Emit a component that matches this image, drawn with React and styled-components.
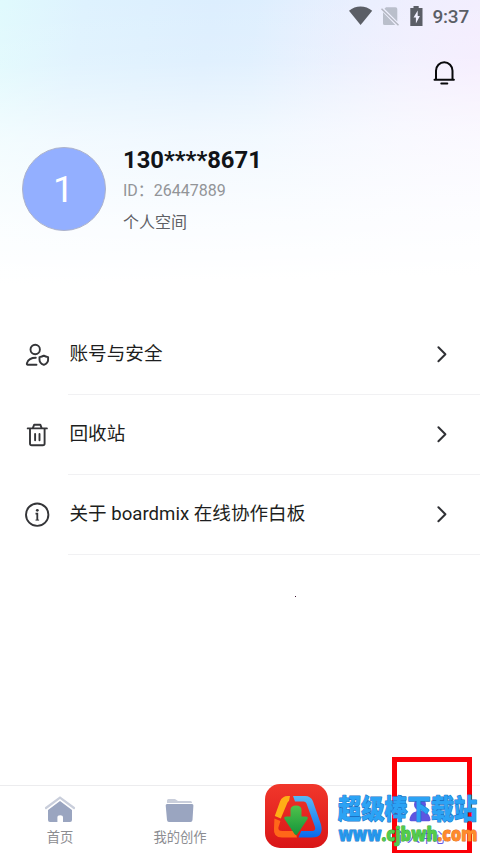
import styled, { createGlobalStyle, css } from 'styled-components'

const GlobalStyle = createGlobalStyle`
    * {
        box-sizing:border-box;
    }
    body {
        margin:0;
        background:#fff;
        font-family:Roboto, "Noto Sans CJK SC", sans-serif;
    }
`;

const Screen = styled.div`
    position:relative;
    display:flex;
    flex-direction:column;
    width:480px;
    height:853px;
    overflow:hidden;
    background:#fff;
`;

const Header = styled.header`
    height:315px;
    background:
        linear-gradient(179deg, rgba(255,255,255,0) 0%, rgba(255,255,255,0.12) 20%, rgba(255,255,255,0.6) 43%, rgba(255,255,255,0.85) 68%, #fff 88%),
        radial-gradient(circle at 500px 70px, #f5ebfe 0%, rgba(243,238,254,0.8) 90px, rgba(240,242,254,0) 250px),
        linear-gradient(100deg, #e0fafd 0%, #def2fe 16%, #dceefe 40%, #e2f0fe 70%, #eff3fe 100%);
`;

const StatusBar = styled.div`
    display:flex;
    align-items:center;
    justify-content:flex-end;
    height:32px;
    padding:0 11px 0 0;
    color:#5b5e66;
`;

const Clock = styled.span`
    margin-left:9px;
    font-size:19px;
    font-weight:500;
    line-height:32px;
    letter-spacing:-0.2px;
    padding-top:1px;
`;

const Actions = styled.div`
    display:flex;
    justify-content:flex-end;
    height:82px;
    padding:26px 22px 0 0;
`;

const Profile = styled.div`
    display:flex;
    padding:33px 0 0 22px;
`;

const Avatar = styled.div`
    display:flex;
    align-items:center;
    justify-content:center;
    width:84px;
    height:84px;
    padding-right:1px;
    border:1px solid #adb3cb;
    border-radius:50%;
    background:#93afff;
    color:#fff;
    font-size:37px;
`;

const Details = styled.div`
    margin-left:17px;
`;

const Name = styled.h1`
    margin:0;
    color:#111317;
    font-size:23.8px;
    font-weight:700;
    line-height:26px;
`;

const Line = styled.p`
    margin:0;
    color:${props => props.$dark ? "#5e6065" : "#929498"};
    font-size:16px;
    line-height:${props => props.$dark ? "28px" : "36px"};
`;

const Menu = styled.main`
    flex:1;
`;

const MenuRow = styled.div`
    display:flex;
    height:80px;
    padding-left:24px;
`;

const MenuIcon = styled.div`
    display:flex;
    align-items:center;
    width:44px;
`;

const MenuBody = styled.div`
    flex:1;
    display:flex;
    align-items:center;
    justify-content:space-between;
    padding-right:30px;
    border-bottom:1px solid #f1f1f3;
    color:#1d1e20;
`;

const MenuLabel = styled.span`
    padding:0 0 1px 1.5px;
    font-size:18.6px;
    line-height:28px;
    white-space:nowrap;
`;

const Speck = styled.i`
    display:block;
    width:1px;
    height:1px;
    margin:41px 0 0 295px;
    background:#3c1030;
`;

const TabBar = styled.nav`
    display:grid;
    grid-template-columns:repeat(4, 1fr);
    height:68px;
    border-top:1px solid #ececee;
`;

const Tab = styled.div`
    display:flex;
    flex-direction:column;
    align-items:center;
    padding-top:9px;
    color:#8c8d91;
    font-size:13.3px;
    line-height:20px;
    ${props => props.$active && css`
        color:#6457e8;
    `}

    svg {
        margin-bottom:3px;
    }
`;

const Highlight = styled.div`
    position:absolute;
    left:392px;
    top:757px;
    width:80px;
    height:98px;
    border:5px solid #fb0007;
`;

const Watermark = styled.svg`
    position:absolute;
    left:260px;
    top:780px;
`;

const UserShield = () => (
    <svg width="26" height="26" viewBox="0 0 26 26" fill="none" stroke="#343538" strokeWidth="1.9" strokeLinecap="round" strokeLinejoin="round">
        <circle cx="11.2" cy="7.5" r="4.7" />
        <path d="M12.5 22.8H3.5Q2.5 22.8 3 21C4.2 17.5 7.5 15.8 11.8 15.8" />
        <path d="M19.8 13.6c1.6 1.1 2.8 1.3 4.3 1.5v2.6c0 2.6-1.7 4.2-4.3 5.2-2.6-1-4.3-2.6-4.3-5.2v-2.6c1.5-.2 2.7-.4 4.3-1.5z" />
    </svg>
)

const Trash = () => (
    <svg width="26" height="26" viewBox="0 0 26 26" fill="none" stroke="#343538" strokeWidth="1.9" strokeLinecap="round" strokeLinejoin="round">
        <path d="M3.7 6.4h19.2M8.8 6.2l1.4-3.5h6.1l1.4 3.5M6 6.8v14.6q0 1.8 1.8 1.8h11q1.8 0 1.8-1.8V6.8" />
        <path d="M11.1 12v6.2M15.5 12v6.2" />
    </svg>
)

const Info = () => (
    <svg width="26" height="26" viewBox="0 0 26 26" fill="none" stroke="#343538" strokeWidth="1.9">
        <circle cx="13.2" cy="12.7" r="11.2" />
        <circle cx="13.3" cy="8.3" r="1.4" fill="#343538" stroke="none" />
        <path d="M11.5 11.6h1.8v6.4" strokeWidth="1.8" />
        <path d="M11.5 18.1h3.6" strokeWidth="1" />
    </svg>
)

const Chevron = () => (
    <svg width="18" height="20" viewBox="0 0 18 20" fill="none" stroke="#303135" strokeWidth="2" strokeLinecap="round" strokeLinejoin="round">
        <path d="M6.4 2.2l7 7-7 7" />
    </svg>
)

const menu = [
    { label: "账号与安全", icon: <UserShield /> },
    { label: "回收站", icon: <Trash /> },
    { label: "关于 boardmix 在线协作白板", icon: <Info /> },
]

const App = () => {
    return (
        <Screen>
            <GlobalStyle />
            <Header>
                <StatusBar>
                    <svg width="76" height="24" viewBox="0 0 76 24">
                        <path d="M2 6.8C8.5 1 18.5 1 25.2 6.8L13.6 21z" fill="#5b5e66" />
                        <path d="M39 3.3h9.5q1.8 0 1.8 1.8V17.5L37.5 4.8zM36 8.3L48.3 21H37.5q-1.5 0-1.5-1.5z" fill="#babfcb" />
                        <path d="M34.5 4.7L51.5 21.3" stroke="#b3b6c0" strokeWidth="1.5" />
                        <path d="M66.5 2h5.2v1.9H75.5V22H63.3V3.9h3.2zM70.7 6.5l-4.2 7h2.4V19.5l4-7.5h-2.2z" fill="#5b5e66" fillRule="evenodd" />
                    </svg>
                    <Clock>9:37</Clock>
                </StatusBar>
                <Actions>
                    <svg width="28" height="30" viewBox="0 0 28 30" fill="none" stroke="#08090b" strokeWidth="2" strokeLinecap="round">
                        <path d="M4.5 21.7h19.4M6 21.5V12.8a8.25 8.5 0 0 1 16.5 0V21.5M11.3 25.4h6" />
                    </svg>
                </Actions>
                <Profile>
                    <Avatar>1</Avatar>
                    <Details>
                        <Name>130****8671</Name>
                        <Line>ID：26447889</Line>
                        <Line $dark>个人空间</Line>
                    </Details>
                </Profile>
            </Header>
            <Menu>
                {menu.map(item => (
                    <MenuRow key={item.label}>
                        <MenuIcon>{item.icon}</MenuIcon>
                        <MenuBody>
                            <MenuLabel>{item.label}</MenuLabel>
                            <Chevron />
                        </MenuBody>
                    </MenuRow>
                ))}
                <Speck />
            </Menu>
            <TabBar>
                <Tab>
                    <svg width="32" height="30" viewBox="0 0 32 30">
                        <path d="M2 13L16 2.5 30 13" fill="none" stroke="#c9cedb" strokeWidth="2.2" strokeLinecap="round" />
                        <path d="M16 6L28 15V25q0 2-2 2h-7v-4.5q0-2.3-2.8-2.3t-2.8 2.3V27H6q-2 0-2-2V15z" fill="#9aa5c0" />
                    </svg>
                    首页
                </Tab>
                <Tab>
                    <svg width="32" height="30" viewBox="0 0 32 30">
                        <path d="M3 7V5.5Q3 4 4.5 4H11l3 2h12.5Q28 6 28 7.5V8H3z" fill="#c9cedb" />
                        <path d="M3 9h25q1.5 0 1.4 1.5L28.5 25q-.2 2-2 2H5q-1.800 0-2-2L1.700 10.500Q1.600 9 3 9z" fill="#9aa5c0" />
                    </svg>
                    我的创作
                </Tab>
                <Tab />
                <Tab $active>
                    <svg width="32" height="30" viewBox="0 0 32 30" fill="#5f55e0">
                        <circle cx="16" cy="9.5" r="6" />
                        <path d="M5.5 24.5c1-6.500 5-8.500 10.500-8.500s9.500 2 10.500 8.500q.2 1.700-1.500 1.700H7q-1.700 0-1.500-1.700z" />
                    </svg>
                    个人中心
                </Tab>
            </TabBar>
            <Highlight />
            <Watermark width="220" height="73" viewBox="0 0 220 73">
                <defs>
                    <linearGradient id="tile" x1="0" y1="0" x2="0" y2="1">
                        <stop offset="0" stopColor="#f1372b" />
                        <stop offset="1" stopColor="#d91517" />
                    </linearGradient>
                    <linearGradient id="ribbon" x1="0" y1="0" x2="0" y2="1">
                        <stop offset="0" stopColor="#58b9f5" />
                        <stop offset="1" stopColor="#0869ee" />
                    </linearGradient>
                    <linearGradient id="arrow" x1="0" y1="0" x2="0" y2="1">
                        <stop offset="0" stopColor="#50c34b" />
                        <stop offset="1" stopColor="#14943b" />
                    </linearGradient>
                </defs>
                <rect x="5" y="4" width="63" height="64" rx="15" fill="url(#tile)" />
                <path d="M30 16h-2q-6 0-8 5.500L14.800 36l6 2.500L27.300 23q.6-1.500 1.700-2z" fill="#ffae16" />
                <path d="M14.400 38.500l6 2.500-2 6.500q-.5 3.500 4 3.500H35l2 6.500H22q-9 0-8-9z" fill="#ff6719" />
                <path d="M33 16h12q6 0 8 5.500l8 23Q64 57.500 52 57.500H38.500l2.700-6.500H52q4 0 3-4l-8.500-23.500q-.8-2-3-2H35z" fill="url(#ribbon)" />
                <path d="M30.500 30q0-4.500 5.500-4.500t5.500 4.500v6.500h4q3.500 0 1.700 3L37.500 54q-1.500 2-3 0L24.800 39.500Q23 36.500 26.500 36.500h4z" fill="url(#arrow)" />
                <g strokeLinejoin="round" paintOrder="stroke">
                    <text transform="translate(78 38.5) scale(1 1.18)" textLength="139" lengthAdjust="spacingAndGlyphs" fontFamily="Noto Sans CJK SC" fontSize="23.5" fontWeight="900" fill="#2ba3f5" stroke="#1c72c4" strokeWidth="1">超级棒下载站</text>
                    <g fontFamily="Open Sans, Noto Sans" fontSize="19.5" fontWeight="800" strokeWidth="0.9">
                        <text x="78.500" y="60.5" textLength="43" lengthAdjust="spacingAndGlyphs" fill="#2298ed" stroke="#1c72c4">www</text>
                        <text x="121.500" y="60.5" textLength="56" lengthAdjust="spacingAndGlyphs" fill="#52cc4a" stroke="#2f9a3c">.cjbwh</text>
                        <text x="177.500" y="60.5" textLength="40" lengthAdjust="spacingAndGlyphs" fill="#ff8a2b" stroke="#dc6a1c">.com</text>
                    </g>
                </g>
            </Watermark>
        </Screen>
    )
}

export default App
